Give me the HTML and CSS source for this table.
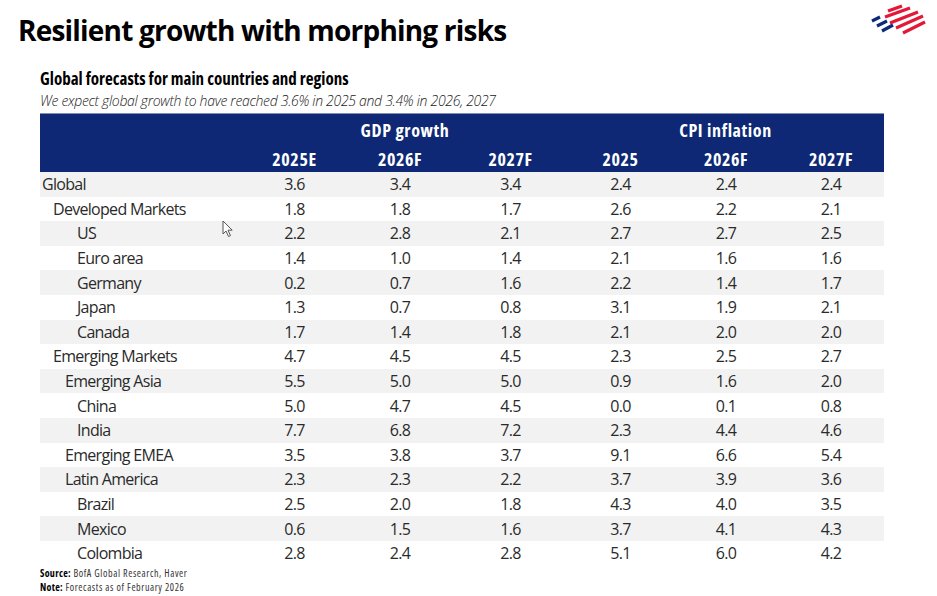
FILE: index.html
```html
<!DOCTYPE html>
<html>
<head>
<meta charset="utf-8">
<link rel="stylesheet" href="styles.css">
</head>
<body>
<div class="page">
  <header class="top">
    <h1 class="title">Resilient growth with morphing risks</h1>
    <svg class="logo" width="60" height="34" viewBox="0 0 60 34">
      <g stroke-linecap="butt" stroke-width="3.2">
        <line x1="4" y1="18" x2="12" y2="14" stroke="#0b2a78"/>
        <line x1="9" y1="23" x2="19" y2="18" stroke="#0b2a78"/>
        <line x1="14" y1="28" x2="25" y2="22" stroke="#0b2a78"/>
        <line x1="20" y1="8" x2="34" y2="3" stroke="#e31837"/>
        <line x1="17" y1="14" x2="42" y2="5" stroke="#e31837"/>
        <line x1="22" y1="20" x2="50" y2="9" stroke="#e31837"/>
        <line x1="28" y1="25" x2="55" y2="13" stroke="#e31837"/>
        <line x1="35" y1="30" x2="57" y2="19" stroke="#e31837"/>
      </g>
    </svg>
  </header>
  <section class="panel">
    <h2 class="panel-title">Global forecasts for main countries and regions</h2>
    <p class="panel-sub">We expect global growth to have reached 3.6% in 2025 and 3.4% in 2026, 2027</p>
    <div class="table">
      <div class="thead">
        <div class="th-group g1">GDP growth</div>
        <div class="th-group g2">CPI inflation</div>
        <div class="th-year c1">2025E</div>
        <div class="th-year c2">2026F</div>
        <div class="th-year c3">2027F</div>
        <div class="th-year c4">2025</div>
        <div class="th-year c5">2026F</div>
        <div class="th-year c6">2027F</div>
      </div>
      <div class="tbody" id="tbody"></div>
      <svg class="cursor" width="12" height="18" viewBox="0 0 12 18">
        <path d="M1 1 L1 14 L4 11 L6.5 16.5 L8.5 15.6 L6 10.2 L10.2 10.2 Z" fill="#fff" stroke="#555" stroke-width="1"/>
      </svg>
    </div>
    <div class="notes">
      <p><b>Source:</b> BofA Global Research, Haver</p>
      <p><b>Note:</b> Forecasts as of February 2026</p>
    </div>
  </section>
</div>
<script src="app.js"></script>
</body>
</html>
```
FILE: app.js
```js
const rows = [
  ["Global", 0, "3.6","3.4","3.4","2.4","2.4","2.4"],
  ["Developed Markets", 1, "1.8","1.8","1.7","2.6","2.2","2.1"],
  ["US", 3, "2.2","2.8","2.1","2.7","2.7","2.5"],
  ["Euro area", 3, "1.4","1.0","1.4","2.1","1.6","1.6"],
  ["Germany", 3, "0.2","0.7","1.6","2.2","1.4","1.7"],
  ["Japan", 3, "1.3","0.7","0.8","3.1","1.9","2.1"],
  ["Canada", 3, "1.7","1.4","1.8","2.1","2.0","2.0"],
  ["Emerging Markets", 1, "4.7","4.5","4.5","2.3","2.5","2.7"],
  ["Emerging Asia", 2, "5.5","5.0","5.0","0.9","1.6","2.0"],
  ["China", 3, "5.0","4.7","4.5","0.0","0.1","0.8"],
  ["India", 3, "7.7","6.8","7.2","2.3","4.4","4.6"],
  ["Emerging EMEA", 2, "3.5","3.8","3.7","9.1","6.6","5.4"],
  ["Latin America", 2, "2.3","2.3","2.2","3.7","3.9","3.6"],
  ["Brazil", 3, "2.5","2.0","1.8","4.3","4.0","3.5"],
  ["Mexico", 3, "0.6","1.5","1.6","3.7","4.1","4.3"],
  ["Colombia", 3, "2.8","2.4","2.8","5.1","6.0","4.2"]
];
const tb = document.getElementById("tbody");
rows.forEach((r, i) => {
  const row = document.createElement("div");
  row.className = "row" + (i % 2 === 0 ? " alt" : "");
  const lab = document.createElement("div");
  lab.className = "label lvl" + r[1];
  lab.textContent = r[0];
  row.appendChild(lab);
  for (let k = 2; k < 8; k++) {
    const c = document.createElement("div");
    c.className = "val";
    c.textContent = r[k];
    row.appendChild(c);
  }
  tb.appendChild(row);
});
```
FILE: styles.css
```css
html, body { margin: 0; padding: 0; background: #fff; }
body { font-family: "Open Sans", "Liberation Sans", sans-serif; color: #1a1a1a; }
.page { width: 937px; height: 596px; position: relative; overflow: hidden; }
.top { display: flex; justify-content: space-between; align-items: flex-start; padding: 0 9px 0 18px; }
.title { margin: 12px 0 0; font-size: 28px; line-height: 36px; font-weight: 700; letter-spacing: -0.8px; color: #000; }
.logo { margin-top: 3px; }
.panel { padding-left: 40px; width: 844px; }
.panel-title { margin: 21px 0 0; font-size: 17px; line-height: 20px; font-weight: 700; font-stretch: 75%; color: #000; letter-spacing: 0; }
.panel-sub { margin: 2px 0 0; font-size: 14px; line-height: 20px; font-style: italic; font-weight: 300; color: #222; letter-spacing: -0.3px; }
.table { position: relative; margin-top: 2px; }
.thead { display: grid; grid-template-columns: 203px 103px 108px 113px 107px 104px 106px; grid-template-rows: 32px 27px; background: #0e2875; color: #fff; font-weight: 700; font-stretch: 75%; font-size: 18px; letter-spacing: 0.6px; border-top: 1px solid #7f8db3; box-sizing: border-box; height: 59px; }
.th-group { grid-row: 1; display: flex; align-items: center; justify-content: center; }
.g1 { grid-column: 2 / 5; }
.g2 { grid-column: 5 / 8; }
.th-year { grid-row: 2; text-align: center; line-height: 27px; }
.c1 { grid-column: 2; } .c2 { grid-column: 3; } .c3 { grid-column: 4; }
.c4 { grid-column: 5; } .c5 { grid-column: 6; } .c6 { grid-column: 7; }
.row { display: grid; grid-template-columns: 203px 103px 108px 113px 107px 104px 106px; height: 24.6px; align-items: center; font-size: 16px; letter-spacing: -0.7px; color: #2a2a2a; }
.row.alt { background: #f2f2f2; }
.label { white-space: nowrap; }
.lvl0 { padding-left: 2px; }
.lvl1 { padding-left: 13px; }
.lvl2 { padding-left: 25px; }
.lvl3 { padding-left: 37px; }
.val { text-align: center; }
.cursor { position: absolute; left: 182px; top: 107px; }
.notes { margin-top: 0; font-size: 10px; line-height: 14px; font-stretch: 75%; letter-spacing: 0.6px; color: #333; }
.notes b { color: #000; letter-spacing: 0.3px; }
.notes p { margin: 0; }
```
